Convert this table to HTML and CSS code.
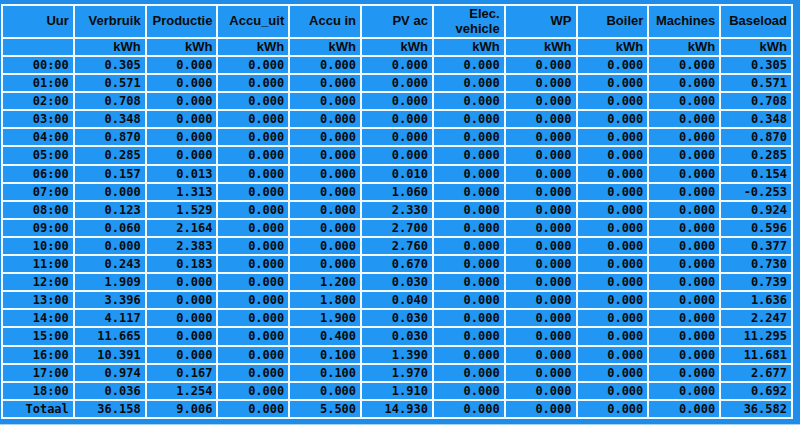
FILE: index.html
```html
<!DOCTYPE html>
<html>
<head>
<meta charset="utf-8">
<link rel="stylesheet" href="styles.css">
</head>
<body>
<div class="wrap">
<table class="grid">
<thead>
<tr class="head"><th>Uur</th><th>Verbruik</th><th>Productie</th><th>Accu_uit</th><th>Accu in</th><th>PV ac</th><th>Elec.<br>vehicle</th><th>WP</th><th>Boiler</th><th>Machines</th><th>Baseload</th></tr>
<tr class="units"><th></th><th>kWh</th><th>kWh</th><th>kWh</th><th>kWh</th><th>kWh</th><th>kWh</th><th>kWh</th><th>kWh</th><th>kWh</th><th>kWh</th></tr>
</thead>
<tbody>
<tr><td>00:00</td><td>0.305</td><td>0.000</td><td>0.000</td><td>0.000</td><td>0.000</td><td>0.000</td><td>0.000</td><td>0.000</td><td>0.000</td><td>0.305</td></tr>
<tr><td>01:00</td><td>0.571</td><td>0.000</td><td>0.000</td><td>0.000</td><td>0.000</td><td>0.000</td><td>0.000</td><td>0.000</td><td>0.000</td><td>0.571</td></tr>
<tr><td>02:00</td><td>0.708</td><td>0.000</td><td>0.000</td><td>0.000</td><td>0.000</td><td>0.000</td><td>0.000</td><td>0.000</td><td>0.000</td><td>0.708</td></tr>
<tr><td>03:00</td><td>0.348</td><td>0.000</td><td>0.000</td><td>0.000</td><td>0.000</td><td>0.000</td><td>0.000</td><td>0.000</td><td>0.000</td><td>0.348</td></tr>
<tr><td>04:00</td><td>0.870</td><td>0.000</td><td>0.000</td><td>0.000</td><td>0.000</td><td>0.000</td><td>0.000</td><td>0.000</td><td>0.000</td><td>0.870</td></tr>
<tr><td>05:00</td><td>0.285</td><td>0.000</td><td>0.000</td><td>0.000</td><td>0.000</td><td>0.000</td><td>0.000</td><td>0.000</td><td>0.000</td><td>0.285</td></tr>
<tr><td>06:00</td><td>0.157</td><td>0.013</td><td>0.000</td><td>0.000</td><td>0.010</td><td>0.000</td><td>0.000</td><td>0.000</td><td>0.000</td><td>0.154</td></tr>
<tr><td>07:00</td><td>0.000</td><td>1.313</td><td>0.000</td><td>0.000</td><td>1.060</td><td>0.000</td><td>0.000</td><td>0.000</td><td>0.000</td><td>-0.253</td></tr>
<tr><td>08:00</td><td>0.123</td><td>1.529</td><td>0.000</td><td>0.000</td><td>2.330</td><td>0.000</td><td>0.000</td><td>0.000</td><td>0.000</td><td>0.924</td></tr>
<tr><td>09:00</td><td>0.060</td><td>2.164</td><td>0.000</td><td>0.000</td><td>2.700</td><td>0.000</td><td>0.000</td><td>0.000</td><td>0.000</td><td>0.596</td></tr>
<tr><td>10:00</td><td>0.000</td><td>2.383</td><td>0.000</td><td>0.000</td><td>2.760</td><td>0.000</td><td>0.000</td><td>0.000</td><td>0.000</td><td>0.377</td></tr>
<tr><td>11:00</td><td>0.243</td><td>0.183</td><td>0.000</td><td>0.000</td><td>0.670</td><td>0.000</td><td>0.000</td><td>0.000</td><td>0.000</td><td>0.730</td></tr>
<tr><td>12:00</td><td>1.909</td><td>0.000</td><td>0.000</td><td>1.200</td><td>0.030</td><td>0.000</td><td>0.000</td><td>0.000</td><td>0.000</td><td>0.739</td></tr>
<tr><td>13:00</td><td>3.396</td><td>0.000</td><td>0.000</td><td>1.800</td><td>0.040</td><td>0.000</td><td>0.000</td><td>0.000</td><td>0.000</td><td>1.636</td></tr>
<tr><td>14:00</td><td>4.117</td><td>0.000</td><td>0.000</td><td>1.900</td><td>0.030</td><td>0.000</td><td>0.000</td><td>0.000</td><td>0.000</td><td>2.247</td></tr>
<tr><td>15:00</td><td>11.665</td><td>0.000</td><td>0.000</td><td>0.400</td><td>0.030</td><td>0.000</td><td>0.000</td><td>0.000</td><td>0.000</td><td>11.295</td></tr>
<tr><td>16:00</td><td>10.391</td><td>0.000</td><td>0.000</td><td>0.100</td><td>1.390</td><td>0.000</td><td>0.000</td><td>0.000</td><td>0.000</td><td>11.681</td></tr>
<tr><td>17:00</td><td>0.974</td><td>0.167</td><td>0.000</td><td>0.100</td><td>1.970</td><td>0.000</td><td>0.000</td><td>0.000</td><td>0.000</td><td>2.677</td></tr>
<tr><td>18:00</td><td>0.036</td><td>1.254</td><td>0.000</td><td>0.000</td><td>1.910</td><td>0.000</td><td>0.000</td><td>0.000</td><td>0.000</td><td>0.692</td></tr>
<tr><td>Totaal</td><td>36.158</td><td>9.006</td><td>0.000</td><td>5.500</td><td>14.930</td><td>0.000</td><td>0.000</td><td>0.000</td><td>0.000</td><td>36.582</td></tr>
</tbody>
</table>
</div>
</body>
</html>
```

FILE: styles.css
```css
html, body {
  margin: 0;
  padding: 0;
  background: #ffffff;
}

.wrap {
  background: #1e8ce8;
  padding: 4px 0 5px 1px;
  border-bottom: 1px solid #a9d3f7;
  width: 800px;
  box-sizing: border-box;
}

.grid {
  border-collapse: collapse;
  table-layout: fixed;
  width: 792px;
  background: #2196f3;
  color: #0a0a0a;
}

.grid th,
.grid td {
  border: 2px solid #f2f8fe;
  padding: 1px 4px;
  text-align: right;
  vertical-align: middle;
  overflow: hidden;
  white-space: nowrap;
}

.grid th {
  font-family: "Liberation Sans", Arial, sans-serif;
  font-weight: bold;
  font-size: 13px;
  line-height: 14.5px;
}

.grid .units th {
  line-height: 14px;
}

.grid td {
  font-family: "DejaVu Sans Mono", monospace;
  font-weight: bold;
  font-size: 12px;
  line-height: 14.1px;
}
```
